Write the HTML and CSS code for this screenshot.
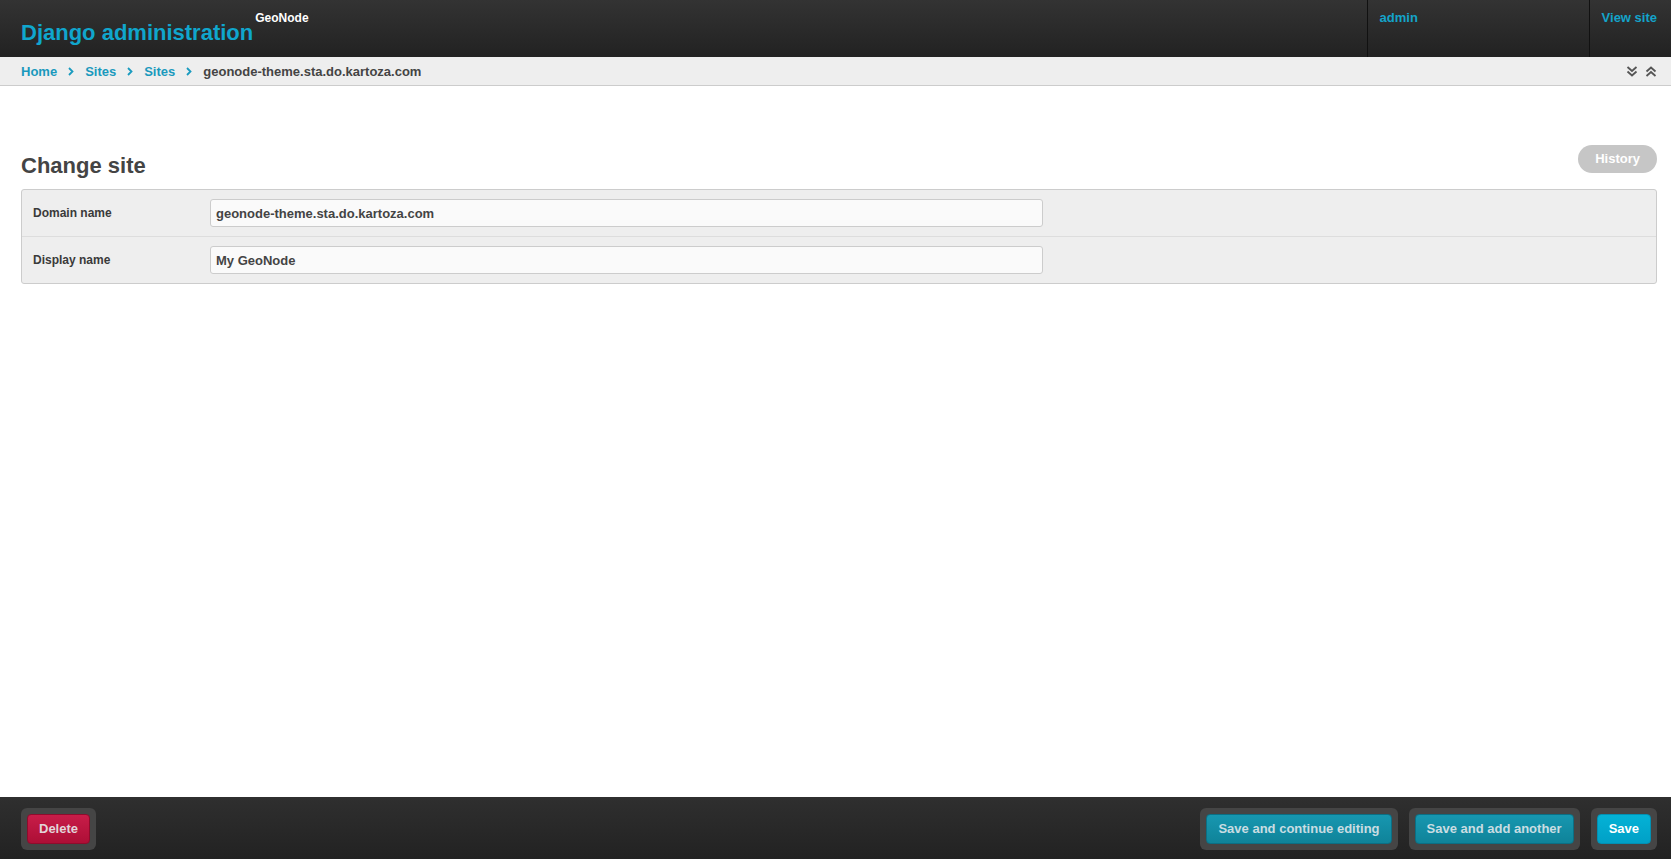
FILE: index.html
```html
<!DOCTYPE html>
<html lang="en">
<head>
    <meta charset="UTF-8">
    <title>Change site | Django site admin</title>
    <link rel="stylesheet" href="styles.css">
</head>
<body>
    <div class="page">
        <div class="header">
            <div class="branding">
                <h1 class="site-title">Django administration</h1>
                <span class="site-sub">GeoNode</span>
            </div>
            <div class="user-tools">
                <div class="tool-cell tool-user"><a href="#">admin</a></div>
                <div class="tool-cell"><a href="#">View site</a></div>
            </div>
        </div>

        <div class="breadcrumbs">
            <div class="crumbs">
                <a href="#">Home</a>
                <svg class="sep" width="6" height="9" viewBox="0 0 6 9"><path d="M1 1l3.5 3.5L1 8" fill="none" stroke="#1a9bbf" stroke-width="1.8"/></svg>
                <a href="#">Sites</a>
                <svg class="sep" width="6" height="9" viewBox="0 0 6 9"><path d="M1 1l3.5 3.5L1 8" fill="none" stroke="#1a9bbf" stroke-width="1.8"/></svg>
                <a href="#">Sites</a>
                <svg class="sep" width="6" height="9" viewBox="0 0 6 9"><path d="M1 1l3.5 3.5L1 8" fill="none" stroke="#1a9bbf" stroke-width="1.8"/></svg>
                <span class="current">geonode-theme.sta.do.kartoza.com</span>
            </div>
            <div class="toggles">
                <svg width="12" height="11" viewBox="0 0 12 11"><path d="M1.5 1l4.5 4 4.5-4M1.5 5.5l4.5 4 4.5-4" fill="none" stroke="#555" stroke-width="1.8"/></svg>
                <svg width="12" height="11" viewBox="0 0 12 11"><path d="M1.5 10l4.5-4 4.5 4M1.5 5.5l4.5-4 4.5 4" fill="none" stroke="#555" stroke-width="1.8"/></svg>
            </div>
        </div>

        <div class="content">
            <div class="content-head">
                <h2 class="page-title">Change site</h2>
                <a href="#" class="history-btn">History</a>
            </div>

            <div class="fieldset">
                <div class="form-row">
                    <label class="field-label" for="id_domain">Domain name</label>
                    <input type="text" id="id_domain" class="field-input" value="geonode-theme.sta.do.kartoza.com">
                </div>
                <div class="form-row">
                    <label class="field-label" for="id_name">Display name</label>
                    <input type="text" id="id_name" class="field-input" value="My GeoNode">
                </div>
            </div>
        </div>

        <div class="submit-row">
            <div class="btn-group">
                <a href="#" class="btn btn-delete">Delete</a>
            </div>
            <div class="submit-right">
                <div class="btn-group"><button class="btn btn-secondary">Save and continue editing</button></div>
                <div class="btn-group"><button class="btn btn-secondary">Save and add another</button></div>
                <div class="btn-group"><button class="btn btn-primary">Save</button></div>
            </div>
        </div>
    </div>
</body>
</html>
```

FILE: styles.css
```css
body {
    margin: 0;
    font-family: "Liberation Sans", Arial, sans-serif;
    color: #444;
    background-color: #fff;
}
a {
    text-decoration: none;
}
.page {
    display: flex;
    flex-direction: column;
    min-height: 100vh;
}
.header {
    display: flex;
    justify-content: space-between;
    height: 57px;
    background: linear-gradient(#333333, #222222);
}
.branding {
    display: flex;
    align-items: flex-start;
    padding: 11px 0 0 21px;
}
.site-title {
    margin: 9px 0 0 0;
    font-size: 22px;
    line-height: 26px;
    font-weight: bold;
    color: #10a6cd;
}
.site-sub {
    margin-left: 2px;
    font-size: 12px;
    line-height: 14px;
    font-weight: bold;
    color: #fff;
}
.user-tools {
    display: flex;
}
.tool-cell {
    border-left: 1px solid #111;
    padding: 10px 14px 0 12px;
    font-size: 13px;
    line-height: 15px;
    font-weight: bold;
}
.tool-user {
    width: 195px;
}
.tool-cell a {
    color: #14a3c9;
}
.breadcrumbs {
    display: flex;
    justify-content: space-between;
    align-items: center;
    height: 28px;
    padding: 0 14px 0 21px;
    background-color: #eeeeee;
    border-bottom: 1px solid #cccccc;
}
.crumbs {
    display: flex;
    align-items: center;
    gap: 11px;
    font-size: 13px;
    font-weight: bold;
}
.crumbs a {
    color: #1a99bd;
}
.crumbs .current {
    color: #444;
}
.toggles {
    display: flex;
    gap: 7px;
}
.content {
    flex: 1;
    padding: 59px 14px 0 21px;
}
.content-head {
    display: flex;
    justify-content: space-between;
    align-items: flex-start;
    margin-bottom: 9px;
}
.page-title {
    margin: 7px 0 0 0;
    font-size: 22px;
    line-height: 28px;
    font-weight: bold;
    color: #444;
}
.history-btn {
    display: block;
    height: 28px;
    line-height: 28px;
    padding: 0 17px;
    border-radius: 14px;
    background-color: #c6c6c6;
    color: #fff;
    font-size: 13px;
    font-weight: bold;
}
.fieldset {
    border: 1px solid #cccccc;
    border-radius: 3px;
    background-color: #eeeeee;
}
.form-row {
    display: flex;
    align-items: center;
    padding: 9px 11px;
    border-bottom: 1px solid #dddddd;
}
.form-row:last-child {
    border-bottom: none;
}
.field-label {
    width: 177px;
    font-size: 12px;
    font-weight: bold;
    color: #3a3a3a;
}
.field-input {
    box-sizing: border-box;
    width: 833px;
    height: 28px;
    padding: 0 5px;
    border: 1px solid #cccccc;
    border-radius: 3px;
    background-color: #fafafa;
    font-family: "Liberation Sans", Arial, sans-serif;
    font-size: 13px;
    font-weight: bold;
    color: #444;
}
.submit-row {
    display: flex;
    justify-content: space-between;
    height: 62px;
    box-sizing: border-box;
    padding: 11px 14px 0 21px;
    background: linear-gradient(#2f2f2f, #222222);
}
.submit-right {
    display: flex;
    gap: 11px;
}
.btn-group {
    height: 42px;
    box-sizing: border-box;
    padding: 6px;
    border-radius: 6px;
    background-color: #454545;
}
.btn {
    display: block;
    box-sizing: border-box;
    height: 30px;
    line-height: 28px;
    padding: 0 11px;
    border-radius: 4px;
    font-family: "Liberation Sans", Arial, sans-serif;
    font-size: 13px;
    font-weight: bold;
    cursor: pointer;
}
.btn-delete {
    border: 1px solid #8e0c2c;
    background: linear-gradient(#c81d49, #ad0f36);
    color: #e2d5d9;
}
.btn-secondary {
    border: 1px solid #0b6f84;
    background: linear-gradient(#1797b0, #0f8399);
    color: #c9dde2;
}
.btn-primary {
    border: 1px solid #0290b2;
    background: linear-gradient(#04b2d6, #00a0c6);
    color: #fff;
}
```
